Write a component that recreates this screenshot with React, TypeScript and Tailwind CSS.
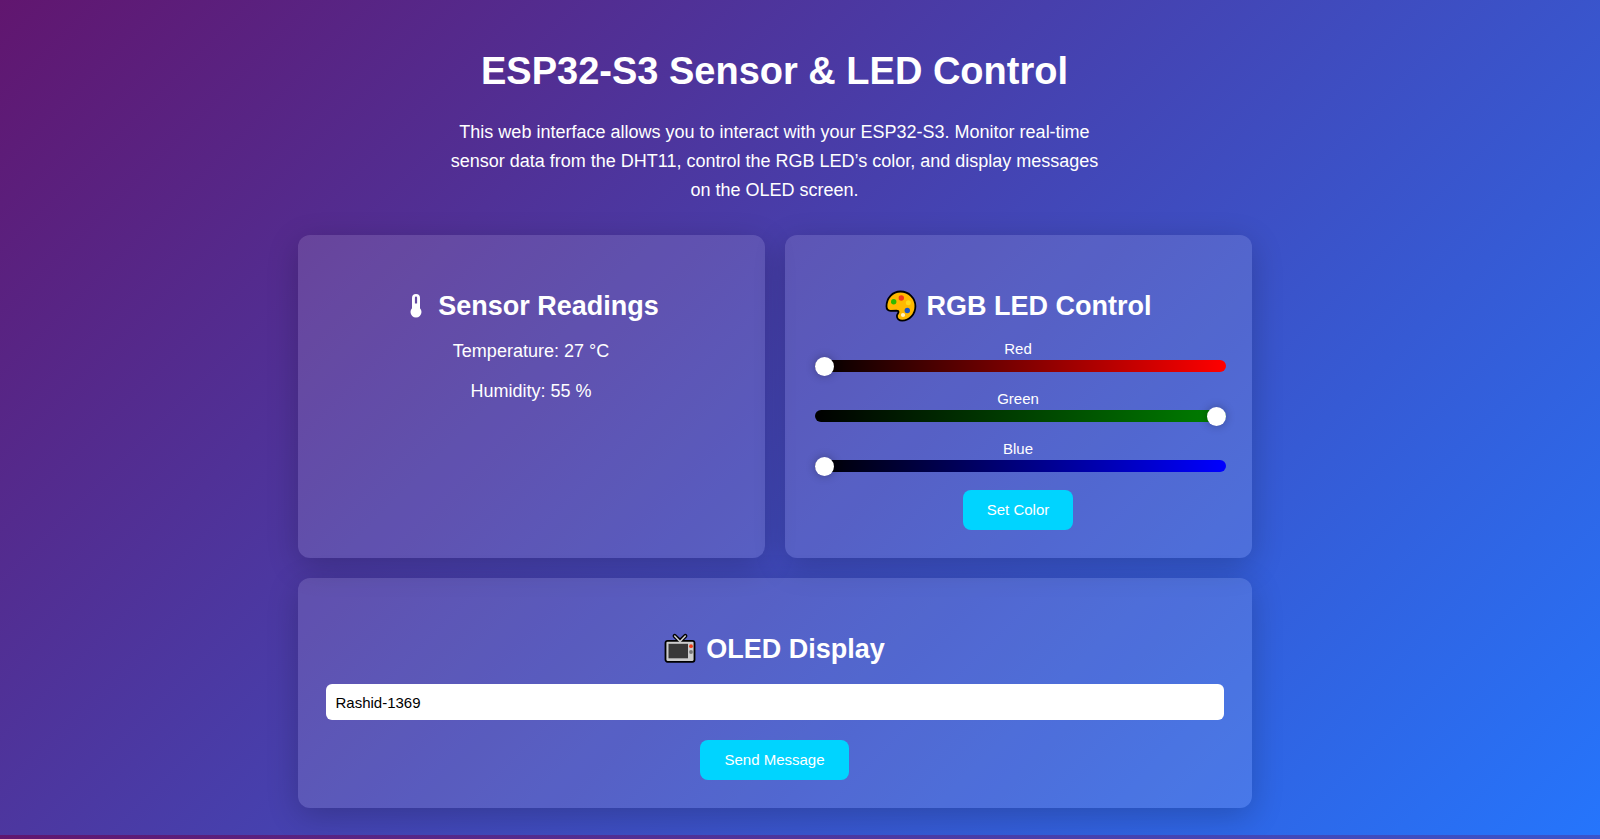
import { useState } from "react";
import type { ReactNode } from "react";

const card =
  "rounded-xl bg-white/12 p-7 pt-[53px] text-center shadow-[0_8px_32px_rgba(0,0,0,0.2)]";
const button =
  "h-10 rounded-lg bg-[#00d4ff] px-6 text-[15px] text-white hover:bg-[#00b8de]";
const slider =
  "mx-0.5 block h-3 w-full appearance-none rounded-full [&::-webkit-slider-thumb]:size-[19px] [&::-webkit-slider-thumb]:appearance-none [&::-webkit-slider-thumb]:rounded-full [&::-webkit-slider-thumb]:bg-white [&::-webkit-slider-thumb]:shadow-[0_0_10px_rgba(0,0,0,0.3)]";

const channels = [
  { id: "red", label: "Red", start: 0, track: "bg-[linear-gradient(to_right,black,red)]" },
  { id: "green", label: "Green", start: 255, track: "bg-[linear-gradient(to_right,black,green)]" },
  { id: "blue", label: "Blue", start: 0, track: "bg-[linear-gradient(to_right,black,blue)]" },
];

function Thermometer() {
  return (
    <svg viewBox="-7 0 25 24" className="h-6 w-[25px]" aria-hidden="true">
      <path
        fill="white"
        fillRule="evenodd"
        d="M6 0a4 4 0 0 1 4 4v10.200a5.500 5.500 0 1 1-8 0V4a4 4 0 0 1 4-4Zm0 2.500a1.100 1.100 0 0 0-1.100 1.100V9.500h2.200V3.600A1.100 1.100 0 0 0 6 2.500Z"
      />
    </svg>
  );
}

function Palette() {
  return (
    <svg viewBox="0 0 32 32" className="size-8" aria-hidden="true">
      <path
        d="M15.500 1.500C23.800 1.500 30.400 8 30.400 16.200c0 8-6 14.400-13.200 14.400-3.300 0-5.300-1.900-5.300-4.500 0-1.900 1.600-2.600 1.600-4.100 0-1-.8-1.400-2-1.400l-5.800.2c-2.700 0-4.200-1.600-4.200-4.500C1.500 8 7.500 1.500 15.500 1.500Z"
        fill="#ffb900"
        stroke="black"
        strokeWidth="1.800"
      />
      <circle cx="8.700" cy="11.800" r="2.700" fill="#2cb800" />
      <circle cx="16.300" cy="8" r="2.700" fill="#f03a17" />
      <circle cx="23.300" cy="12.800" r="2.500" fill="#ffd91a" />
      <circle cx="22.300" cy="20.500" r="2.700" fill="#1b54c0" />
      <circle cx="18" cy="25" r="2.100" fill="#fff3c4" />
    </svg>
  );
}

function Television() {
  return (
    <svg viewBox="0 0 32 32" className="size-8" aria-hidden="true">
      <path d="m10.700 3 5.300 5 5.300-5" fill="none" stroke="black" strokeWidth="4.200" strokeLinecap="round" strokeLinejoin="round" />
      <rect x="1.500" y="7.800" width="29" height="21" rx="2" fill="#cccccc" stroke="black" strokeWidth="1.800" />
      <path d="m10.700 3 5.300 5.500 5.300-5.500" fill="none" stroke="#cccccc" strokeWidth="1.600" strokeLinecap="round" />
      <rect x="4.500" y="10.800" width="19.500" height="14.500" fill="#383838" />
      <circle cx="27" cy="13.200" r="1.900" fill="#f03a17" />
      <circle cx="27" cy="19" r="1.900" fill="#767676" />
    </svg>
  );
}

function Heading({ icon, children }: { icon: ReactNode; children: string }) {
  return (
    <h2 className="flex h-9 items-center justify-center gap-2.5 text-[27px] font-bold">
      {icon}
      {children}
    </h2>
  );
}

export default function App() {
  const [levels, setLevels] = useState(channels.map((c) => c.start));
  const [message, setMessage] = useState("Rashid-1369");

  return (
    <div className="flex min-h-screen flex-col font-['Liberation_Sans',Arial,sans-serif] text-white">
      <div className="bg-[linear-gradient(135deg,#61166f,#2575fc)] pt-12 pr-[71px] pb-[27px] pl-5">
        <main className="mx-auto max-w-[954px]">
          <header className="text-center">
            <h1 className="text-[38px] leading-[46px] font-bold">ESP32-S3 Sensor &amp; LED Control</h1>
            <p className="mx-auto mt-6 max-w-[672px] text-lg leading-[29px]">
              This web interface allows you to interact with your ESP32-S3. Monitor real-time sensor data
              from the DHT11, control the RGB LED’s color, and display messages on the OLED screen.
            </p>
          </header>

          <div className="mt-[30px] grid gap-5 md:grid-cols-2">
            <section className={card}>
              <Heading icon={<Thermometer />}>Sensor Readings</Heading>
              <p className="mt-[17px] text-lg leading-5">Temperature: 27 °C</p>
              <p className="mt-5 text-lg leading-5">Humidity: 55 %</p>
            </section>

            <section className={card}>
              <Heading icon={<Palette />}>RGB LED Control</Heading>
              <div className="mt-4 flex flex-col gap-[18px]">
                {channels.map((c, i) => (
                  <div key={c.id}>
                    <label htmlFor={c.id} className="block pb-0.5 text-[15px] leading-[18px]">
                      {c.label}
                    </label>
                    <input
                      id={c.id}
                      type="range"
                      min={0}
                      max={255}
                      value={levels[i]}
                      onChange={(e) => setLevels(levels.map((v, j) => (j === i ? Number(e.target.value) : v)))}
                      className={`${slider} ${c.track}`}
                    />
                  </div>
                ))}
              </div>
              <button type="button" className={`mt-[18px] ${button}`}>
                Set Color
              </button>
            </section>

            <section className={`md:col-span-2 ${card}`}>
              <Heading icon={<Television />}>OLED Display</Heading>
              <input
                type="text"
                aria-label="Message"
                value={message}
                onChange={(e) => setMessage(e.target.value)}
                className="mt-[17px] block h-9 w-full rounded-md bg-white px-2.5 text-[15px] text-black"
              />
              <button type="button" className={`mt-5 ${button}`}>
                Send Message
              </button>
            </section>
          </div>
        </main>
      </div>
      <div className="flex-1 bg-[linear-gradient(135deg,#61166f,#2575fc)] bg-[length:100%_835px]" />
    </div>
  );
}
